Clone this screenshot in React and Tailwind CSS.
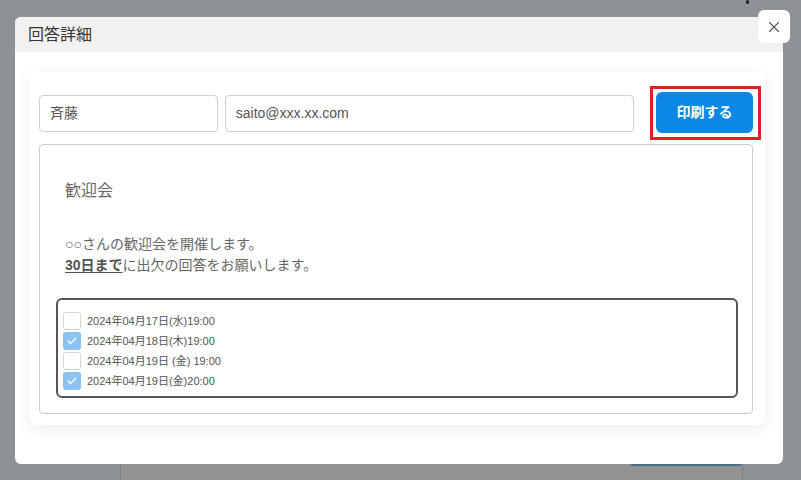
import React from 'react';
import { X, Check } from 'lucide-react';

const font = { fontFamily: '"Liberation Sans", "Noto Sans CJK JP", sans-serif' };

const dates = [
    { label: '2024年04月17日(水)19:00', checked: false },
    { label: '2024年04月18日(木)19:00', checked: true },
    { label: '2024年04月19日 (金) 19:00', checked: false },
    { label: '2024年04月19日(金)20:00', checked: true },
];

const DateRow = ({ label, checked }) => (
    <div className="flex items-center h-5">
        {checked ? (
            <span className="w-[18px] h-[18px] rounded-[3px] bg-[#8cc3f3] flex items-center justify-center">
                <Check className="w-3 h-3 text-white" strokeWidth={2.5} />
            </span>
        ) : (
            <span className="w-[18px] h-[18px] rounded-[3px] border border-[#d6d6d6] bg-white"></span>
        )}
        <span className="ml-[6px] text-[11px] text-[#555]">{label}</span>
    </div>
);

const App = () => {
    return (
        <div className="relative w-[801px] h-[480px] overflow-hidden bg-[#8e9196]" style={font}>
            {/* page behind the overlay */}
            <div className="flex flex-col h-full">
                <div className="h-[463px] relative">
                    <span className="absolute left-[746px] top-0 w-[3px] h-[4px] rounded-full bg-[#222]"></span>
                </div>
                <div className="flex-1 ml-[120px] w-[623px] bg-[#939393] border-x border-[#7d7f83] flex justify-end">
                    <div className="w-[112px] h-[3px] rounded-b bg-[#4b6e8c]"></div>
                </div>
            </div>

            {/* modal */}
            <div className="absolute left-[15px] top-[17px] w-[768px] h-[447px] bg-white rounded-md flex flex-col">
                <div className="h-[35px] bg-[#f1f1f1] rounded-t-md flex items-center pl-[13px]">
                    <span className="text-[16px] text-[#333]">回答詳細</span>
                </div>
                <div className="pt-5 px-[14px]">
                    <div className="w-[736px] h-[353px] bg-white rounded-lg shadow-[0_4px_16px_rgba(0,0,0,0.08)] pl-[10px] pr-[4px] pt-[14px]">
                        <div className="flex items-center">
                            <div className="w-[179px] h-[37px] border border-[#cfcfcf] rounded-[4px] flex items-center px-[10px] text-[14px] text-[#555]">
                                斉藤
                            </div>
                            <div className="ml-[7px] w-[410px] h-[37px] border border-[#cfcfcf] rounded-[4px] flex items-center px-[10px] text-[14px] text-[#555]">
                                saito@xxx.xx.com
                            </div>
                            <div className="ml-[16px] w-[111px] h-[54px] border-[3px] border-[#e31e24] pl-[3px] pr-[5px] py-[3px]">
                                <button className="w-full h-[41px] rounded-md bg-[#0c87e3] text-white text-[14px] font-bold">
                                    印刷する
                                </button>
                            </div>
                        </div>
                        <div className="mt-[4px] w-[714px] h-[270px] border border-[#cccccc] rounded-[4px] pt-[34px] pl-[25px] pr-[15px]">
                            <div className="text-[16px] text-[#666] leading-6">歓迎会</div>
                            <div className="mt-[31px] text-[14px] text-[#666] leading-[21px]">
                                <div>○○さんの歓迎会を開催します。</div>
                                <div>
                                    <span className="font-bold text-[#555] underline underline-offset-2">30日まで</span>に出欠の回答をお願いします。
                                </div>
                            </div>
                            <div className="mt-[22px] -ml-[9px] w-[682px] h-[100px] border-2 border-[#555] rounded-md pt-[11px] pl-[5px]">
                                {dates.map((d) => (
                                    <DateRow key={d.label} {...d} />
                                ))}
                            </div>
                        </div>
                    </div>
                </div>
            </div>

            {/* close button */}
            <button className="absolute left-[758px] top-[10px] w-[32px] h-[33px] bg-white rounded-md flex items-center justify-center">
                <X className="w-[18px] h-[18px] text-[#555]" strokeWidth={1.5} />
            </button>
        </div>
    );
};

export default App;
